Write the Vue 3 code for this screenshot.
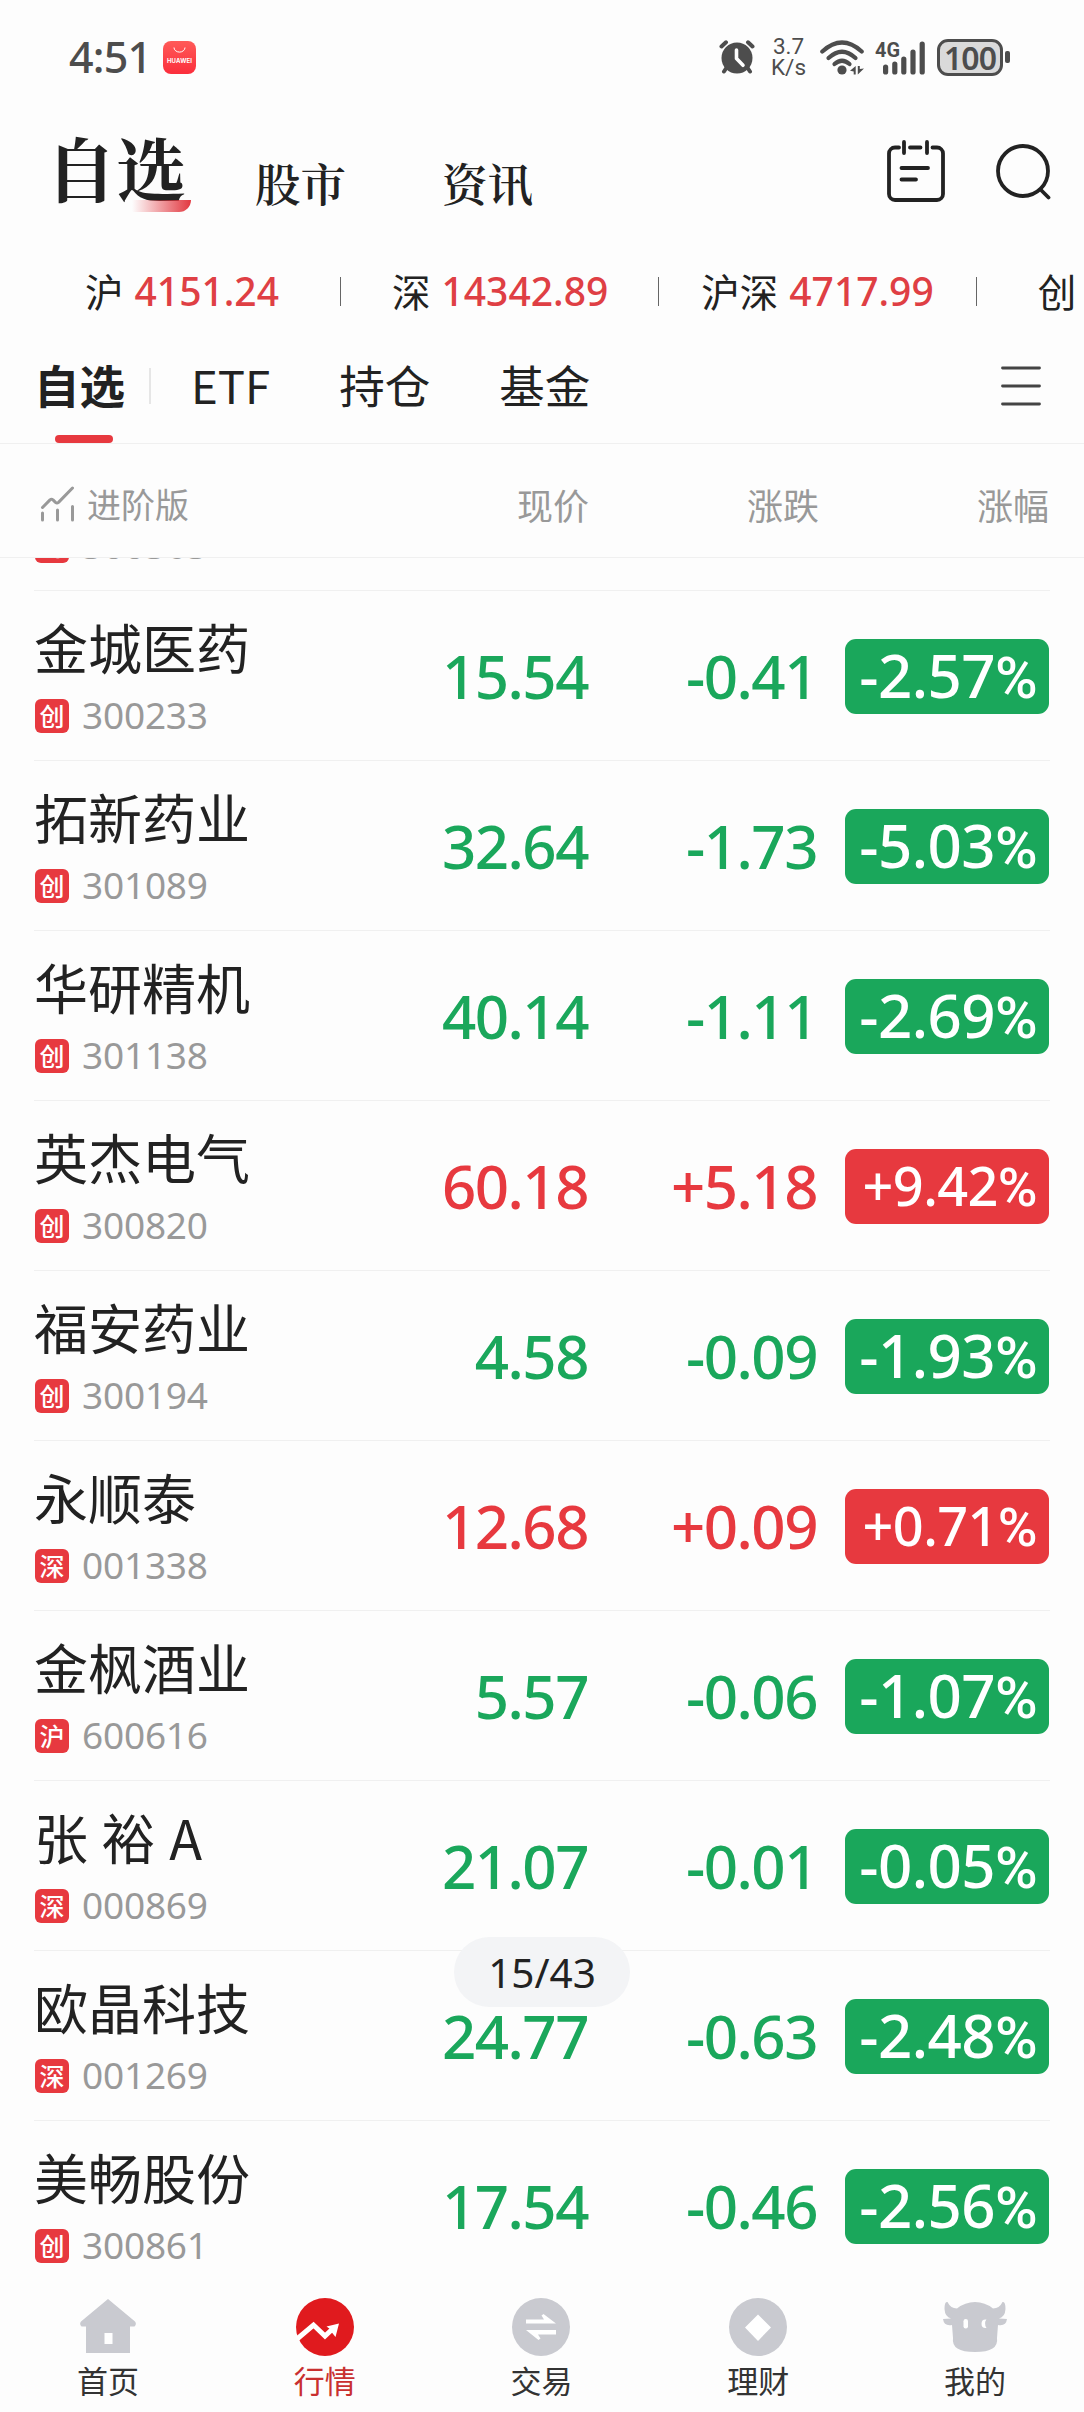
<script setup>
import { ref } from 'vue'

const indexes = [
  { name: '沪', value: '4151.24' },
  { name: '深', value: '14342.89' },
  { name: '沪深', value: '4717.99' },
  { name: '创', value: '' }
]

const groups = ['ETF', '持仓', '基金']

// первая строка наполовину уехала под шапку таблицы
const stocks = [
  { name: '', market: '创', code: '300363', price: '', change: '', pct: '' },
  { name: '金城医药', market: '创', code: '300233', price: '15.54', change: '-0.41', pct: '-2.57' },
  { name: '拓新药业', market: '创', code: '301089', price: '32.64', change: '-1.73', pct: '-5.03' },
  { name: '华研精机', market: '创', code: '301138', price: '40.14', change: '-1.11', pct: '-2.69' },
  { name: '英杰电气', market: '创', code: '300820', price: '60.18', change: '+5.18', pct: '+9.42' },
  { name: '福安药业', market: '创', code: '300194', price: '4.58', change: '-0.09', pct: '-1.93' },
  { name: '永顺泰', market: '深', code: '001338', price: '12.68', change: '+0.09', pct: '+0.71' },
  { name: '金枫酒业', market: '沪', code: '600616', price: '5.57', change: '-0.06', pct: '-1.07' },
  { name: '张 裕 A', market: '深', code: '000869', price: '21.07', change: '-0.01', pct: '-0.05' },
  { name: '欧晶科技', market: '深', code: '001269', price: '24.77', change: '-0.63', pct: '-2.48' },
  { name: '美畅股份', market: '创', code: '300861', price: '17.54', change: '-0.46', pct: '-2.56' }
]

const tabs = [
  { key: 'home', label: '首页' },
  { key: 'market', label: '行情' },
  { key: 'trade', label: '交易' },
  { key: 'wealth', label: '理财' },
  { key: 'me', label: '我的' }
]
const activeTab = ref('market')

const trend = (s) => (s.change.startsWith('+') ? 'up' : 'down')
</script>

<template>
  <div class="app">
    <!-- Status bar -->
    <div class="status">
      <span class="status-time">4:51</span>
      <svg class="status-app" viewBox="0 0 33 33">
        <defs>
          <linearGradient id="hw" x1="0" y1="0" x2="0" y2="1">
            <stop offset="0" stop-color="#ff5a58" />
            <stop offset="1" stop-color="#fb2e3c" />
          </linearGradient>
        </defs>
        <rect width="33" height="33" rx="8" fill="url(#hw)" />
        <path d="M11 6.500a5.500 4.600 0 0 0 11 0" fill="none" stroke="#fff" stroke-width="1" />
        <text x="16.500" y="21.500" text-anchor="middle" class="hw-text" textLength="25">HUAWEI</text>
      </svg>
      <div class="status-right">
        <svg class="ic-alarm" viewBox="0 0 36 34">
          <g stroke="#4d4d4d" stroke-width="4" stroke-linecap="round" fill="none">
            <path d="M2.500 6.500L7 2.300M33.500 6.500L29 2.300M8 27l-3 4.500M28 27l3 4.500" />
          </g>
          <circle cx="18" cy="18" r="15.500" fill="#4d4d4d" />
          <path d="M17.500 10v8.500l6.500 6.800" fill="none" stroke="#fff" stroke-width="3.600" stroke-linecap="round" stroke-linejoin="round" />
        </svg>
        <div class="speed"><span>3.7</span><span>K/s</span></div>
        <svg class="ic-wifi" viewBox="0 0 44 35">
          <g fill="none" stroke="#4d4d4d" stroke-width="4.200" stroke-linecap="round">
            <path d="M2.300 11.500Q22 -6.500 41.700 11.500" />
            <path d="M8.500 18Q22 5.500 35.500 18" />
            <path d="M14.500 24Q22 17.500 29.500 24" />
          </g>
          <circle cx="22" cy="30" r="4.600" fill="#4d4d4d" />
          <path d="M35.700 26v8.500h-2v-3L30 30.700zM37.800 34.500V26h2v3l4.200-.5z" fill="#4d4d4d" />
        </svg>
        <svg class="ic-signal" viewBox="0 0 51 35">
          <text x="0" y="17" class="g-text" textLength="25" lengthAdjust="spacingAndGlyphs">4G</text>
          <g stroke="#4d4d4d" stroke-width="5.200" stroke-linecap="round">
            <path d="M10.600 27v5M19.800 24v8M28.800 19v13M38 12v20M47.200 4v28" />
          </g>
        </svg>
        <div class="battery"><span>100</span></div>
        <i class="battery-nub"></i>
      </div>
    </div>

    <!-- Header -->
    <header class="head">
      <h1 class="head-main">自选</h1>
      <span class="head-link">股市</span>
      <span class="head-link">资讯</span>
      <div class="head-icons">
        <svg class="ic-note" viewBox="0 0 60 64" fill="none" stroke="#222" stroke-width="3.800" stroke-linecap="round">
          <path d="M13 8.500H9a6 6 0 0 0-6 6V55a6 6 0 0 0 6 6h42a6 6 0 0 0 6-6V14.500a6 6 0 0 0-6-6h-4.500M24 8.500h10.500M18 3v11M41 3v11M15.500 29H42M15.500 40.500H30" />
        </svg>
        <svg class="ic-search" viewBox="0 0 56 56" fill="none" stroke="#222" stroke-width="3.800" stroke-linecap="round">
          <circle cx="27" cy="27" r="25" />
          <path d="M44.500 45.500l8 8" />
        </svg>
      </div>
    </header>

    <!-- Indexes -->
    <div class="ticker">
      <div v-for="i in indexes" :key="i.name" class="ticker-item">
        <span class="ticker-name">{{ i.name }}</span>
        <span v-if="i.value" class="ticker-value">{{ i.value }}</span>
      </div>
    </div>

    <!-- Groups -->
    <nav class="groups">
      <span class="group active">自选</span>
      <i class="group-split"></i>
      <span v-for="g in groups" :key="g" class="group">{{ g }}</span>
      <svg class="ic-menu" viewBox="0 0 40 42" stroke="#444" stroke-width="2.800" stroke-linecap="round">
        <path d="M1.500 3h37M1.500 21h37M1.500 39h37" />
      </svg>
    </nav>

    <!-- Table head -->
    <div class="cols">
      <div class="cols-mode">
        <svg class="ic-chart" viewBox="0 0 34 36" fill="none" stroke="#999" stroke-width="3" stroke-linecap="round" stroke-linejoin="round">
          <path d="M2 21.500l7.500-7.600q1.500-1.200 3 0l2.500 2.500q1.500 1.200 3 0L32 2M2 27v7M17 24v10M32 20.500v13.500" />
        </svg>
        <span>进阶版</span>
      </div>
      <span>现价</span>
      <span>涨跌</span>
      <span>涨幅</span>
    </div>

    <!-- List -->
    <main class="list">
      <div v-for="s in stocks" :key="s.code" :class="['row', trend(s)]">
        <div class="info">
          <div class="name">{{ s.name }}</div>
          <div class="meta">
            <span class="badge">{{ s.market }}</span>
            <span class="code">{{ s.code }}</span>
          </div>
        </div>
        <div class="num">{{ s.price }}</div>
        <div class="num">{{ s.change }}</div>
        <div v-if="s.pct" class="pct">{{ s.pct }}<span class="sign">%</span></div>
      </div>
      <div class="counter">15/43</div>
    </main>

    <!-- Tab bar -->
    <footer class="tabbar">
      <div
        v-for="t in tabs"
        :key="t.key"
        :class="['tab', { active: activeTab === t.key }]"
        @click="activeTab = t.key"
      >
        <svg class="tab-icon" viewBox="0 0 64 60">
          <template v-if="t.key === 'home'">
            <path d="M32 2L59 24.500q2 2.500-.5 5h-4.500V56H10V29.500H5.500q-2.500-2.500-.5-5z" fill="#c9cad0" />
            <rect x="28.500" y="36" width="8" height="11" fill="#fff" />
          </template>
          <template v-else-if="t.key === 'market'">
            <circle cx="32" cy="30" r="29" class="dot" />
            <path d="M4 42L20.500 28 32 39 40 31.500" fill="none" stroke="#fff" stroke-width="5" />
            <path d="M46 26.500L33.500 29.500l3.500 2.500 1.500 3 4 5z" fill="#fff" />
          </template>
          <template v-else-if="t.key === 'trade'">
            <circle cx="32" cy="30" r="29" fill="#c9cad0" />
            <path d="M17 22.500h18l-2.500-4 2-1.500L47 26.500H17zM47 37.500H29l2.500 4-2 1.500L17 33h30z" fill="#fff" />
          </template>
          <template v-else-if="t.key === 'wealth'">
            <circle cx="32" cy="30" r="29" fill="#c9cad0" />
            <path d="M32 17.500L45 30.500 32 44 19 30.500z" fill="#fff" />
          </template>
          <template v-else>
            <path d="M4.500 5Q7.500 11.500 14 11.500Q22 5 32 5T50 11.500Q56.500 11.500 59.500 5Q62.500 4 62.500 12Q62 20 56 21.500L64 22Q63 29.500 55 28L54 41Q56 55 32 55T10 41L9 28Q1 29.500 0 22L8 21.500Q2 20 1.500 12Q1.500 4 4.500 5z" fill="#c9cad0" />
            <rect x="20.500" y="22" width="4.500" height="9.500" rx="2.200" fill="#fff" />
            <path d="M43.500 22.500q-3 3.500 0 8.500-5 .5-5-4.300t5-4.200z" fill="#fff" />
          </template>
        </svg>
        <span class="tab-label">{{ t.label }}</span>
      </div>
    </footer>
  </div>
</template>

<style>
body {
  background: #fdfdfd;
}
</style>

<style scoped>
.app {
  --up: #e7393f;
  --down: #1aa75b;
  --num: 'Noto Sans', 'Noto Sans CJK SC', sans-serif;
  width: 1084px;
  height: 2412px;
  overflow: hidden;
  background: #fdfdfd;
  color: #222;
  font-family: 'Noto Sans CJK SC', sans-serif;
  display: flex;
  flex-direction: column;
}
.app > * {
  box-sizing: border-box;
  flex-shrink: 0;
}

/* ── Status bar ── */
.status {
  height: 114px;
  padding: 0 74px 0 69px;
  display: flex;
  align-items: center;
  color: #4d4d4d;
  font-family: var(--num);
}
.status-time {
  width: 94px;
  font-size: 43px;
  font-weight: 500;
  letter-spacing: -0.8px;
  line-height: 60px;
}
.status-app {
  width: 33px;
  height: 33px;
}
.hw-text {
  font: 700 6px Inter, sans-serif;
  fill: #fff;
}
.status-right {
  margin-left: auto;
  display: flex;
  align-items: center;
}
.ic-alarm { width: 36px; height: 34px; }
.speed {
  width: 33px;
  margin: 0 15px 0 17px;
  display: flex;
  flex-direction: column;
  align-items: center;
  font: 400 22.500px/21px Roboto, sans-serif;
}
.ic-wifi { width: 44px; height: 35px; }
.ic-signal { width: 51px; height: 35px; margin-left: 11px; }
.g-text {
  font: 700 21px Roboto, sans-serif;
  fill: #4d4d4d;
}
.battery {
  box-sizing: border-box;
  width: 66px;
  height: 37px;
  margin-left: 11px;
  border: 3px solid #4d4d4d;
  border-radius: 11px;
  background: #dadada;
  display: flex;
  align-items: center;
  justify-content: center;
  font: 600 32px/31px 'Noto Sans', sans-serif;
  letter-spacing: -1px;
}
.battery-nub {
  width: 5px;
  height: 12px;
  margin-left: 2px;
  border-radius: 2px;
  background: #4d4d4d;
}

/* ── Header ── */
.head {
  height: 132px;
  padding: 0 32px 0 46px;
  display: flex;
  align-items: flex-start;
  font-family: 'Noto Serif CJK SC', 'Noto Serif SC', 'Noto Sans CJK SC', serif;
  font-weight: 600;
}
.head-main {
  position: relative;
  margin: 13px 0 0;
  width: 209px;
  font-size: 70px;
  font-weight: 700;
  line-height: 80px;
}
.head-main::after {
  content: '';
  position: absolute;
  left: 86px;
  top: 73px;
  width: 59px;
  height: 12px;
  border-radius: 0 0 14px 0;
  background: linear-gradient(90deg, rgba(231, 57, 63, 0), #e2373f);
}
.head-link {
  margin-top: 39px;
  width: 187px;
  font-size: 45.500px;
  line-height: 60px;
}
.head-icons {
  margin: 25px 0 0 auto;
  display: flex;
  gap: 50px;
}
.ic-note { width: 60px; height: 64px; }
.ic-search { width: 56px; height: 56px; margin-top: 5px; }

/* ── Indexes ── */
.ticker {
  height: 90px;
  padding-left: 85px;
  display: flex;
  align-items: center;
  white-space: nowrap;
}
.ticker-item {
  display: flex;
  align-items: center;
  line-height: 50px;
}
.ticker-item + .ticker-item::before {
  content: '';
  width: 1px;
  height: 29px;
  margin: 0 51px 0 61px;
  background: #666;
}
.ticker-item:nth-child(3)::before { margin: 0 42px 0 50px; }
.ticker-item:nth-child(4)::before { margin: 0 61px 0 42px; }
.ticker-name {
  font-size: 38.500px;
  margin-top: -3px;
}
.ticker-value {
  margin-left: 11px;
  font: 500 39px/50px var(--num);
  color: #df3f44;
}

/* ── Groups ── */
.groups {
  height: 108px;
  padding: 0 43px 8px 34px;
  display: flex;
  align-items: center;
  border-bottom: 1px solid #f0f0f0;
  font-size: 45.500px;
}
.group {
  margin: -3px 69px 0 0;
  line-height: 60px;
}
.group.active {
  position: relative;
  margin-right: 24px;
  font-weight: 700;
}
.group.active::after {
  content: '';
  position: absolute;
  left: 21px;
  top: 81px;
  width: 58px;
  height: 8px;
  border-radius: 4px;
  background: var(--up);
}
.group-split {
  width: 2px;
  height: 36px;
  margin-right: 40px;
  background: #e6e6e6;
}
.ic-menu {
  width: 40px;
  height: 42px;
  margin-left: auto;
}

/* ── Table head ── */
.cols {
  height: 114px;
  padding: 6px 35px 0 40px;
  display: grid;
  grid-template-columns: 1fr 118px 230px 230px;
  align-items: center;
  text-align: right;
  border-bottom: 1px solid #f0f0f0;
  color: #999;
  font-size: 36px;
  line-height: 48px;
}
.cols-mode {
  display: flex;
  align-items: center;
  gap: 12px;
  font-size: 34px;
}
.ic-chart { width: 35px; height: 36px; }

/* ── List ── */
.list {
  position: relative;
  height: 1722px;
  overflow: hidden;
}
.row {
  box-sizing: border-box;
  height: 170px;
  margin: 0 34px;
  border-bottom: 1px solid #f0f0f0;
  display: grid;
  grid-template-columns: 325px 230px 229px 1fr;
  align-items: center;
}
.row:first-child {
  margin-top: -137px;
}
.info {
  align-self: start;
}
.name {
  height: 64px;
  margin-top: 24px;
  font-size: 54px;
  line-height: 64px;
  word-spacing: 1.500px;
  white-space: nowrap;
}
.meta {
  display: flex;
  align-items: center;
  gap: 13px;
  margin: 20px 0 0 1px;
  height: 34px;
}
.badge {
  width: 34px;
  height: 34px;
  border-radius: 6px;
  background: var(--up);
  color: #fff;
  font-size: 25px;
  font-weight: 500;
  line-height: 33px;
  text-align: center;
}
.code {
  margin-top: -3px;
  font: 400 37px/34px var(--num);
  letter-spacing: -0.2px;
  color: #999;
}
.num {
  padding-right: 1px;
  font: 500 60px/74px var(--num);
  letter-spacing: -1.500px;
  text-align: right;
}
.up .num { color: var(--up); }
.down .num { color: var(--down); }
.pct {
  box-sizing: border-box;
  width: 204px;
  height: 75px;
  padding-right: 12px;
  justify-self: end;
  margin: 2px 1px 0 0;
  border-radius: 11px;
  color: #fff;
  font: 500 60px/72px var(--num);
  letter-spacing: -0.600px;
  text-align: right;
  white-space: nowrap;
}
.up .pct {
  background: var(--up);
  font-size: 54px;
}
.down .pct { background: var(--down); }
.sign {
  font-family: Roboto, sans-serif;
  font-size: 58px;
  font-weight: 500;
}
.up .sign { font-size: 54px; }

.counter {
  position: absolute;
  left: 454px;
  top: 1379px;
  width: 176px;
  height: 70px;
  border-radius: 35px;
  background: #f3f4f6;
  font: 400 40.500px/71px var(--num);
  text-align: center;
}

/* ── Tab bar ── */
.tabbar {
  height: 132px;
  display: grid;
  grid-template-columns: repeat(5, 1fr);
  background: #fdfdfd;
}
.tab {
  display: flex;
  flex-direction: column;
  align-items: center;
  padding: 17px 1px 0 0;
}
.tab-icon {
  width: 64px;
  height: 60px;
}
.tab-label {
  margin-top: 3px;
  font-size: 31px;
  line-height: 40px;
  color: #333;
}
.dot { fill: #c9cad0; }
.active .dot { fill: #e01a1e; }
.active .tab-label { color: #c93030; }
</style>
